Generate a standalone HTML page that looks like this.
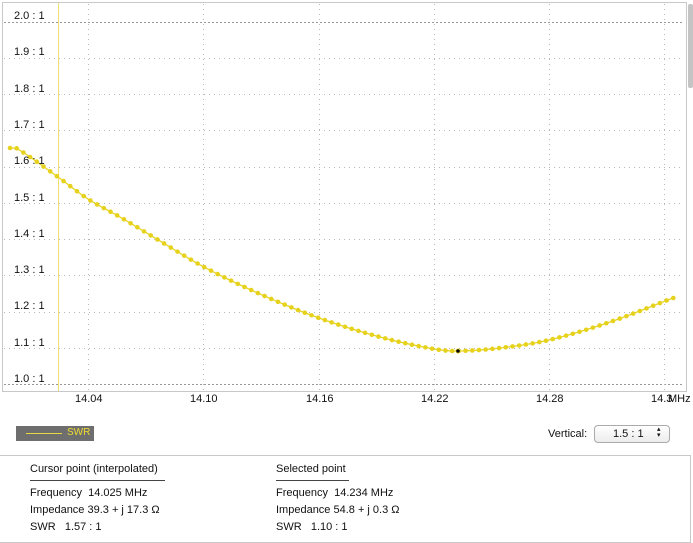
<!DOCTYPE html>
<html><head><style>
body{margin:0;width:693px;height:543px;background:#fff;font-family:"Liberation Sans",sans-serif;position:relative;overflow:hidden;color:#111}
.a{position:absolute;white-space:nowrap}
.yl{font-size:11px;left:14px}
.xl{font-size:11px;top:393px}
.p{font-size:11px}
</style></head><body>
<svg class="a" style="left:0;top:0" width="693" height="400">
<rect x="2.5" y="2.5" width="684" height="389" fill="#fff" stroke="#c8c8c8"/>
<rect x="688" y="4" width="5" height="84" fill="#c4c4c4" rx="2"/>
<g stroke="#b8b8b8" stroke-dasharray="1,4" stroke-width="1">
<line x1="4" x2="683" y1="22.5" y2="22.5" stroke="#999" stroke-dasharray="2,2"/>
<line x1="4" x2="683" y1="58.5" y2="58.5"/><line x1="4" x2="683" y1="94.5" y2="94.5"/>
<line x1="4" x2="683" y1="130.5" y2="130.5"/><line x1="4" x2="683" y1="167.5" y2="167.5"/>
<line x1="4" x2="683" y1="203.5" y2="203.5"/><line x1="4" x2="683" y1="239.5" y2="239.5"/>
<line x1="4" x2="683" y1="275.5" y2="275.5"/><line x1="4" x2="683" y1="312.5" y2="312.5"/>
<line x1="4" x2="683" y1="348.5" y2="348.5"/>
<line x1="4" x2="683" y1="384.5" y2="384.5" stroke="#999" stroke-dasharray="2,2"/>
<line x1="88.5" x2="88.5" y1="4" y2="390"/><line x1="203.5" x2="203.5" y1="4" y2="390"/>
<line x1="319.5" x2="319.5" y1="4" y2="390"/><line x1="434.5" x2="434.5" y1="4" y2="390"/>
<line x1="549.5" x2="549.5" y1="4" y2="390"/><line x1="664.5" x2="664.5" y1="4" y2="390"/>
</g>
<line x1="58.5" x2="58.5" y1="3" y2="391" stroke="#f0e070"/>
<g id="cv"></g>
</svg>
<div class="a yl" style="top:10px">2.0 : 1</div>
<div class="a yl" style="top:46px">1.9 : 1</div>
<div class="a yl" style="top:83px">1.8 : 1</div>
<div class="a yl" style="top:119px">1.7 : 1</div>
<div class="a yl" style="top:155px">1.6 : 1</div>
<div class="a yl" style="top:192px">1.5 : 1</div>
<div class="a yl" style="top:228px">1.4 : 1</div>
<div class="a yl" style="top:264px">1.3 : 1</div>
<div class="a yl" style="top:300px">1.2 : 1</div>
<div class="a yl" style="top:337px">1.1 : 1</div>
<div class="a yl" style="top:373px">1.0 : 1</div>
<div class="a xl" style="left:75px">14.04</div>
<div class="a xl" style="left:190px">14.10</div>
<div class="a xl" style="left:306px">14.16</div>
<div class="a xl" style="left:421px">14.22</div>
<div class="a xl" style="left:536px">14.28</div>
<div class="a xl" style="left:651px">14.3</div>
<div class="a xl" style="left:668px">MHz</div>
<div class="a" style="left:16px;top:426px;width:78px;height:15px;background:#6e6e6e"></div>
<div class="a" style="left:26px;top:433px;width:36px;height:1px;background:#e8d840"></div>
<div class="a" style="left:67px;top:427px;font-size:10px;color:#f0dc30">SWR</div>
<div class="a p" style="left:548px;top:428px">Vertical:</div>
<div class="a" style="left:594px;top:425px;width:74px;height:16px;border:1px solid #aaa;border-radius:4px;background:linear-gradient(#fff,#ececec);font-size:11px"><span class="a" style="left:18px;top:2px">1.5 : 1</span><span class="a" style="left:62px;top:1px;font-size:7px;line-height:6px">▴<br>▾</span></div>
<div class="a" style="left:0;top:455px;width:690px;height:86px;border:1px solid #c8c8c8;border-left:0"></div>
<div class="a p" style="left:30px;top:463px">Cursor point (interpolated)</div>
<div class="a" style="left:30px;top:480px;width:135px;height:1px;background:#444"></div>
<div class="a p" style="left:30px;top:487px">Frequency&nbsp; 14.025 MHz</div>
<div class="a p" style="left:30px;top:504px">Impedance 39.3 + j 17.3 Ω</div>
<div class="a p" style="left:30px;top:521px">SWR&nbsp;&nbsp; 1.57 : 1</div>
<div class="a p" style="left:276px;top:463px">Selected point</div>
<div class="a" style="left:276px;top:480px;width:73px;height:1px;background:#444"></div>
<div class="a p" style="left:276px;top:487px">Frequency&nbsp; 14.234 MHz</div>
<div class="a p" style="left:276px;top:504px">Impedance 54.8 + j 0.3 Ω</div>
<div class="a p" style="left:276px;top:521px">SWR&nbsp;&nbsp; 1.10 : 1</div>
<script>
var P=[[10,148],[17,148.5],[58,177],[88,199],[120,217],[160,241],[204,267],[260,294],[319,318],[380,337],[434,349],[458,351],[500,348],[549,340],[610,322],[673,298]];
function f(x){for(var i=0;i<P.length-1;i++){if(x<=P[i+1][0]){var p0=P[Math.max(i-1,0)],p1=P[i],p2=P[i+1],p3=P[Math.min(i+2,P.length-1)];var t=(x-p1[0])/(p2[0]-p1[0]);var m1=(p2[1]-p0[1])/(p2[0]-p0[0])*(p2[0]-p1[0]),m2=(p3[1]-p1[1])/(p3[0]-p1[0])*(p2[0]-p1[0]);var t2=t*t,t3=t2*t;return (2*t3-3*t2+1)*p1[1]+(t3-2*t2+t)*m1+(-2*t3+3*t2)*p2[1]+(t3-t2)*m2;}}return P[P.length-1][1];}
var s='<polyline fill="none" stroke="#e8d420" stroke-width="1.3" points="';var c='';
for(var x=10;x<=673.5;x+=6.7){var y=f(x);s+=x+','+y+' ';c+='<circle cx="'+x+'" cy="'+y+'" r="2.3" fill="#e6d21c"/>';}
s+='"/>';c+='<circle cx="458" cy="351" r="2.6" fill="#f0e040"/><circle cx="458" cy="351" r="1.8" fill="#000"/>';
document.getElementById('cv').innerHTML=s+c;
</script>
</body></html>
